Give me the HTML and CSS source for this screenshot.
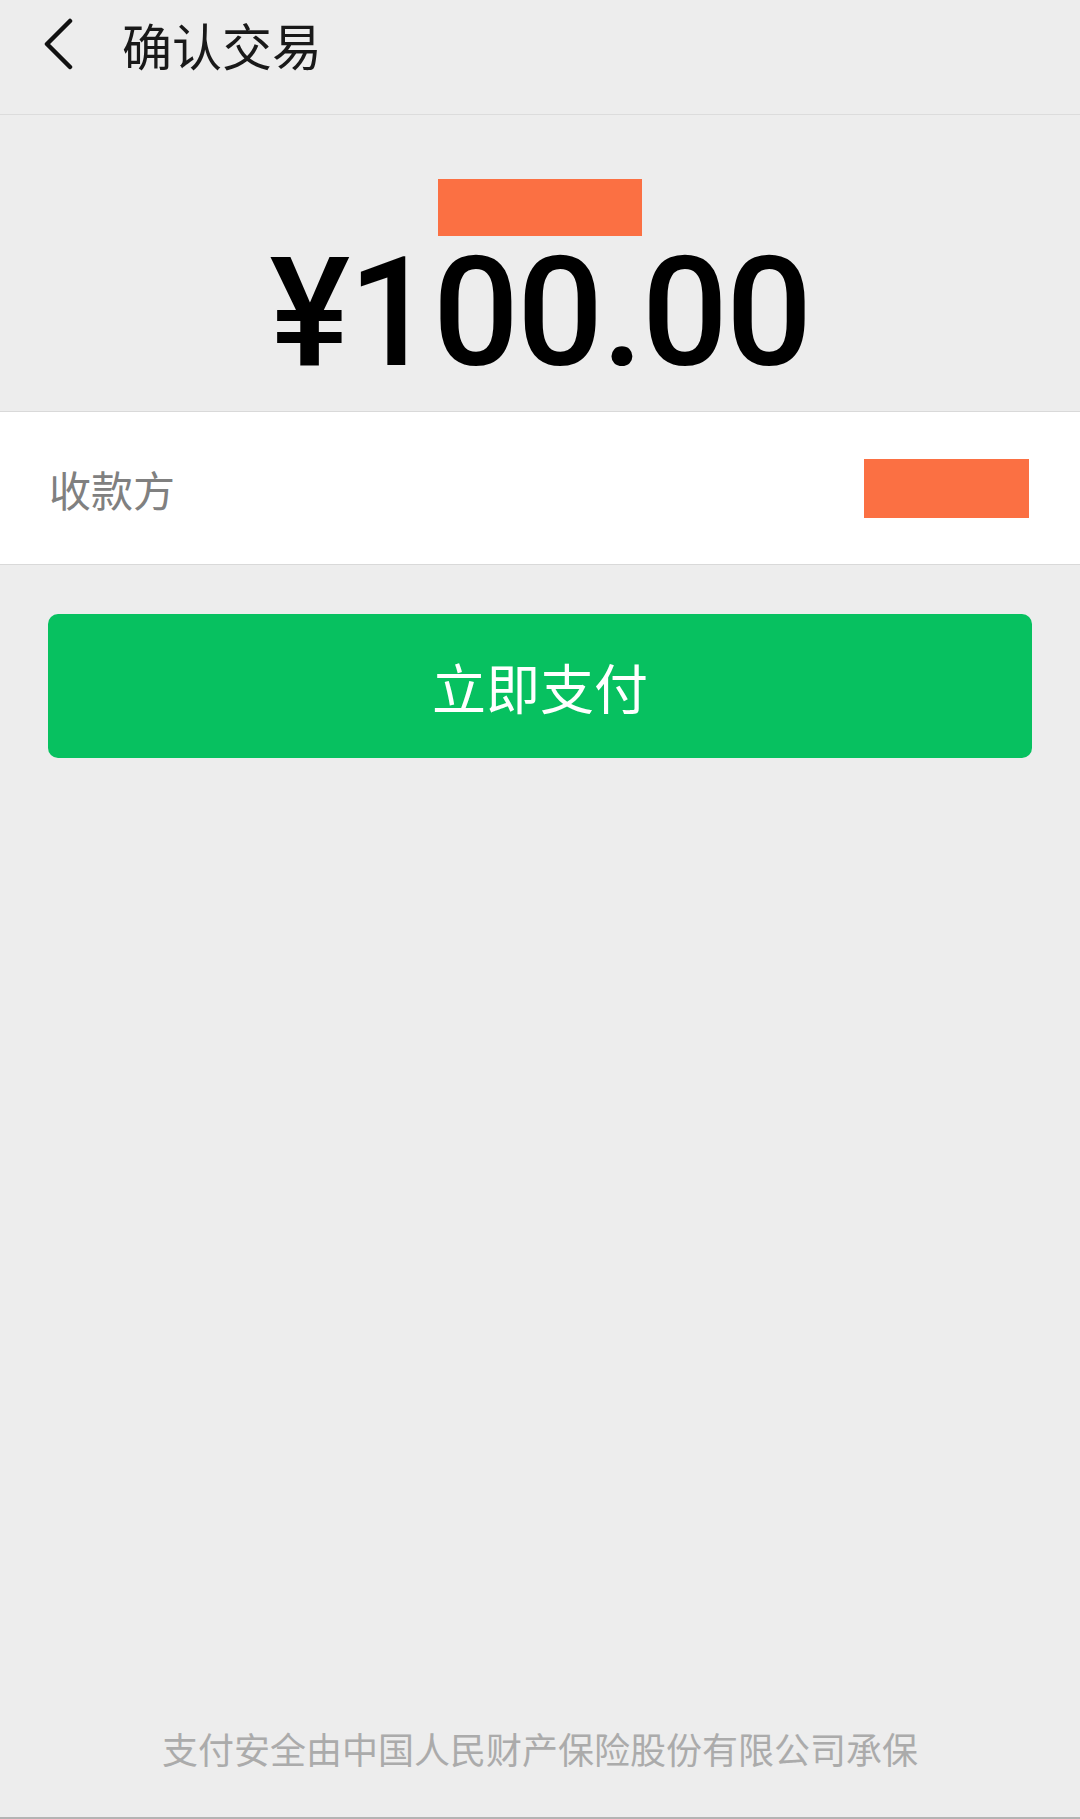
FILE: index.html
```html
<!DOCTYPE html>
<html lang="zh-CN">

	<head>
		<meta charset="UTF-8">
		<title>确认交易</title>
		<link rel="stylesheet" href="styles.css">
	</head>

	<body>
		<div class="page">
			<div class="header">
				<svg class="back" width="30" height="52" viewBox="0 0 30 52">
					<path d="M27 3 L4 26 L27 49" fill="none" stroke="#111" stroke-width="4.5" stroke-linecap="round" stroke-linejoin="round"/>
				</svg>
				<div class="title">确认交易</div>
			</div>

			<div class="amount-box">
				<div class="mask mask-name"></div>
				<div class="amount">¥100.00</div>
			</div>

			<div class="row">
				<span class="label">收款方</span>
				<div class="mask mask-payee"></div>
			</div>

			<div class="pay-btn">立即支付</div>

			<div class="footer">支付安全由中国人民财产保险股份有限公司承保</div>
		</div>
	</body>

</html>
```

FILE: styles.css
```css
* {
	margin: 0;
	padding: 0;
	box-sizing: border-box;
}

body {
	background: #ededed;
	font-family: "Noto Sans CJK SC", "Noto Sans", sans-serif;
}

.page {
	min-height: 1819px;
	display: flex;
	flex-direction: column;
	border-bottom: 2px solid #b4b4b4;
}

.header {
	height: 115px;
	padding-bottom: 27px;
	display: flex;
	align-items: center;
	border-bottom: 1px solid #dcdcdc;
}

.back {
	margin-left: 43px;
}

.title {
	margin-left: 49px;
	font-size: 50px;
	line-height: 1;
	color: #191919;
}

.amount-box {
	display: flex;
	flex-direction: column;
	align-items: center;
	padding: 64px 0 22px;
	border-bottom: 1px solid #d9d9d9;
}

.mask {
	background: #fb7043;
}

.mask-name {
	width: 204px;
	height: 57px;
}

.amount {
	margin-top: 1px;
	font-family: Roboto, "Liberation Sans", sans-serif;
	font-weight: 500;
	font-size: 152px;
	line-height: 152px;
	letter-spacing: -2px;
	color: #000;
}

.row {
	height: 153px;
	background: #fff;
	display: flex;
	align-items: center;
	justify-content: space-between;
	padding: 0 51px 0 49px;
	border-bottom: 1px solid #d9d9d9;
}

.label {
	font-size: 42px;
	color: #808080;
}

.mask-payee {
	width: 165px;
	height: 59px;
}

.pay-btn {
	margin: 49px 48px 0;
	height: 144px;
	border-radius: 10px;
	background: #07c160;
	color: #fff;
	font-size: 54px;
	display: flex;
	align-items: center;
	justify-content: center;
}

.footer {
	margin-top: auto;
	padding-bottom: 51px;
	text-align: center;
	font-size: 36px;
	line-height: 36px;
	color: #ababab;
}
```
